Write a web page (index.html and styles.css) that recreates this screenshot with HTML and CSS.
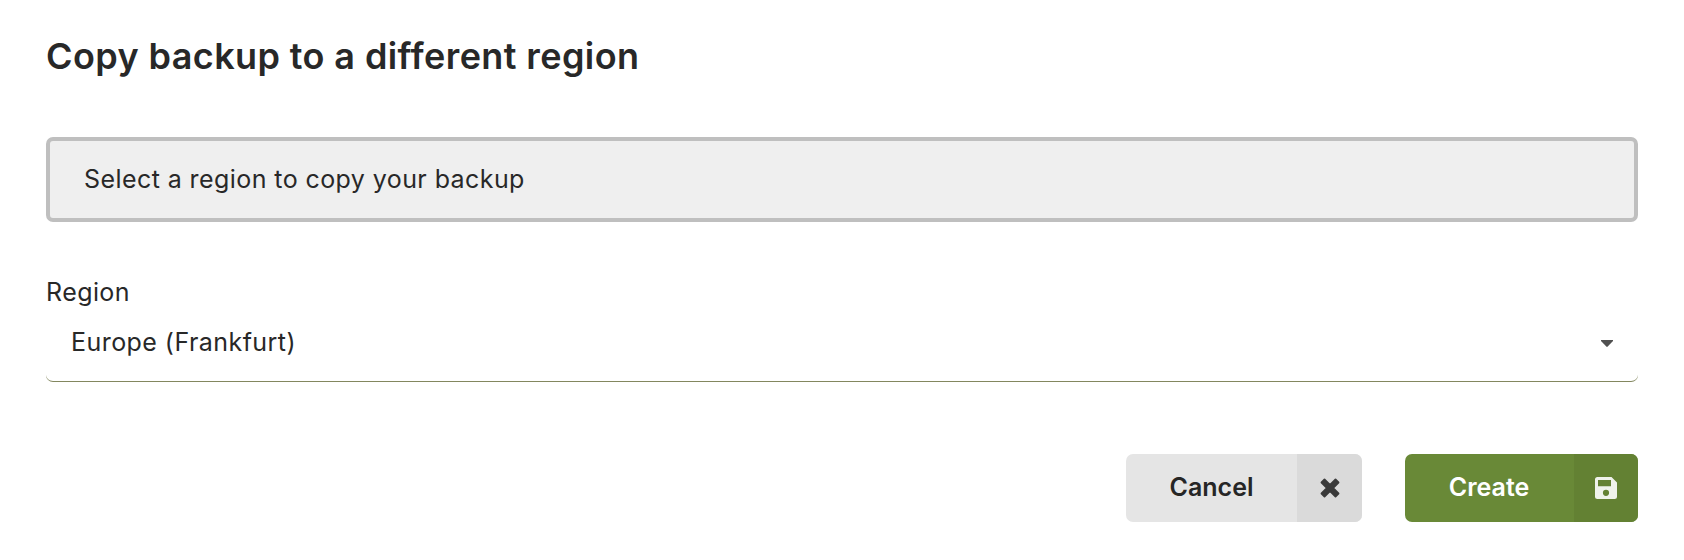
FILE: index.html
```html
<!DOCTYPE html>
<html lang="en">
<head>
<meta charset="utf-8">
<title>Copy backup</title>
<link rel="stylesheet" href="styles.css">
</head>
<body>
<main class="dialog">
  <h1 class="title">Copy backup to a different region</h1>
  <div class="notice"><span class="notice-text">Select a region to copy your backup</span></div>
  <div class="label"><span class="label-text">Region</span></div>
  <div class="select"><span class="value">Europe (Frankfurt)</span>
    <svg class="caret" viewBox="0 0 12 7"><path d="M0 0h12v1L6.700 6.600q-.7.600-1.400 0L0 1z"/></svg>
  </div>
  <div class="actions">
    <button class="button cancel"><span class="caption"><span class="cancel-text">Cancel</span></span><span class="icon"><svg class="cross" viewBox="0 0 20 20"><path d="M4.500 1.500L10 7l5.500-5.500L18.500 4.500L13 10l5.500 5.500L15.500 18.500L10 13l-5.500 5.500L1.500 15.500L7 10L1.500 4.500z"/></svg></span></button>
    <button class="button create"><span class="caption"><span class="create-text">Create</span></span><span class="icon"><svg class="save" viewBox="0 0 22 22"><path fill-rule="evenodd" d="M2.500 0H16.500L22 5.500V19.500a2.500 2.500 0 0 1-2.500 2.500H2.500A2.500 2.500 0 0 1 0 19.500V2.500A2.500 2.500 0 0 1 2.500 0zM3 3v6.300h13V3zM11 12.700a3.100 3.100 0 1 0 0 6.200 3.100 3.100 0 0 0 0-6.200z"/></svg></span></button>
  </div>
</main>
</body>
</html>
```
FILE: styles.css
```css
* { box-sizing: border-box; }
body { margin: 0; background: #fff; color: #282828; font-family: Inter, sans-serif; font-size: 25px; font-weight: 370; font-variant-ligatures: none; }
.dialog { padding: 34px 46px 0; }
.title { margin: 0; height: 44px; line-height: 44px; font-size: 36px; font-weight: 600; letter-spacing: .4px; font-feature-settings: "calt" 0, "liga" 0; white-space: nowrap; }
.notice { margin-top: 59px; height: 85px; padding: 0 34px 2px; display: flex; align-items: center; border: 4px solid #bfbfbf; border-radius: 7px; background: #efefef; }
.notice-text { letter-spacing: .42px; }
.label { margin-top: 54px; height: 32px; line-height: 32px; }
.label-text { letter-spacing: .42px; }
.select { height: 74px; display: flex; align-items: center; justify-content: space-between; padding: 0 25px 5px; border-bottom: 1px solid #83875f; border-radius: 7px; }
.value { letter-spacing: .45px; }
.caret { width: 12px; height: 7px; margin-top: 3px; fill: #505050; }
.actions { margin-top: 72px; display: flex; justify-content: flex-end; gap: 43px; }
.button { display: flex; height: 68px; padding: 0; border: 0; border-radius: 7px; overflow: hidden; font: 600 25px Inter, sans-serif; color: #262626; background: #e5e5e5; }
.caption { width: 171px; height: 100%; padding-bottom: 2px; display: flex; align-items: center; justify-content: center; }
.icon { width: 65px; height: 100%; display: flex; align-items: center; justify-content: center; background: #dadada; }
.cross { width: 20px; height: 20px; fill: #3a3a3a; stroke: #3a3a3a; stroke-width: 1.800; stroke-linejoin: round; }
.create { color: #fff; background: #698937; }
.create .caption { width: 169px; padding-right: 1px; }
.create .icon { width: 64px; background: #638133; }
.save { width: 22px; height: 22px; fill: #eff2eb; }
```
